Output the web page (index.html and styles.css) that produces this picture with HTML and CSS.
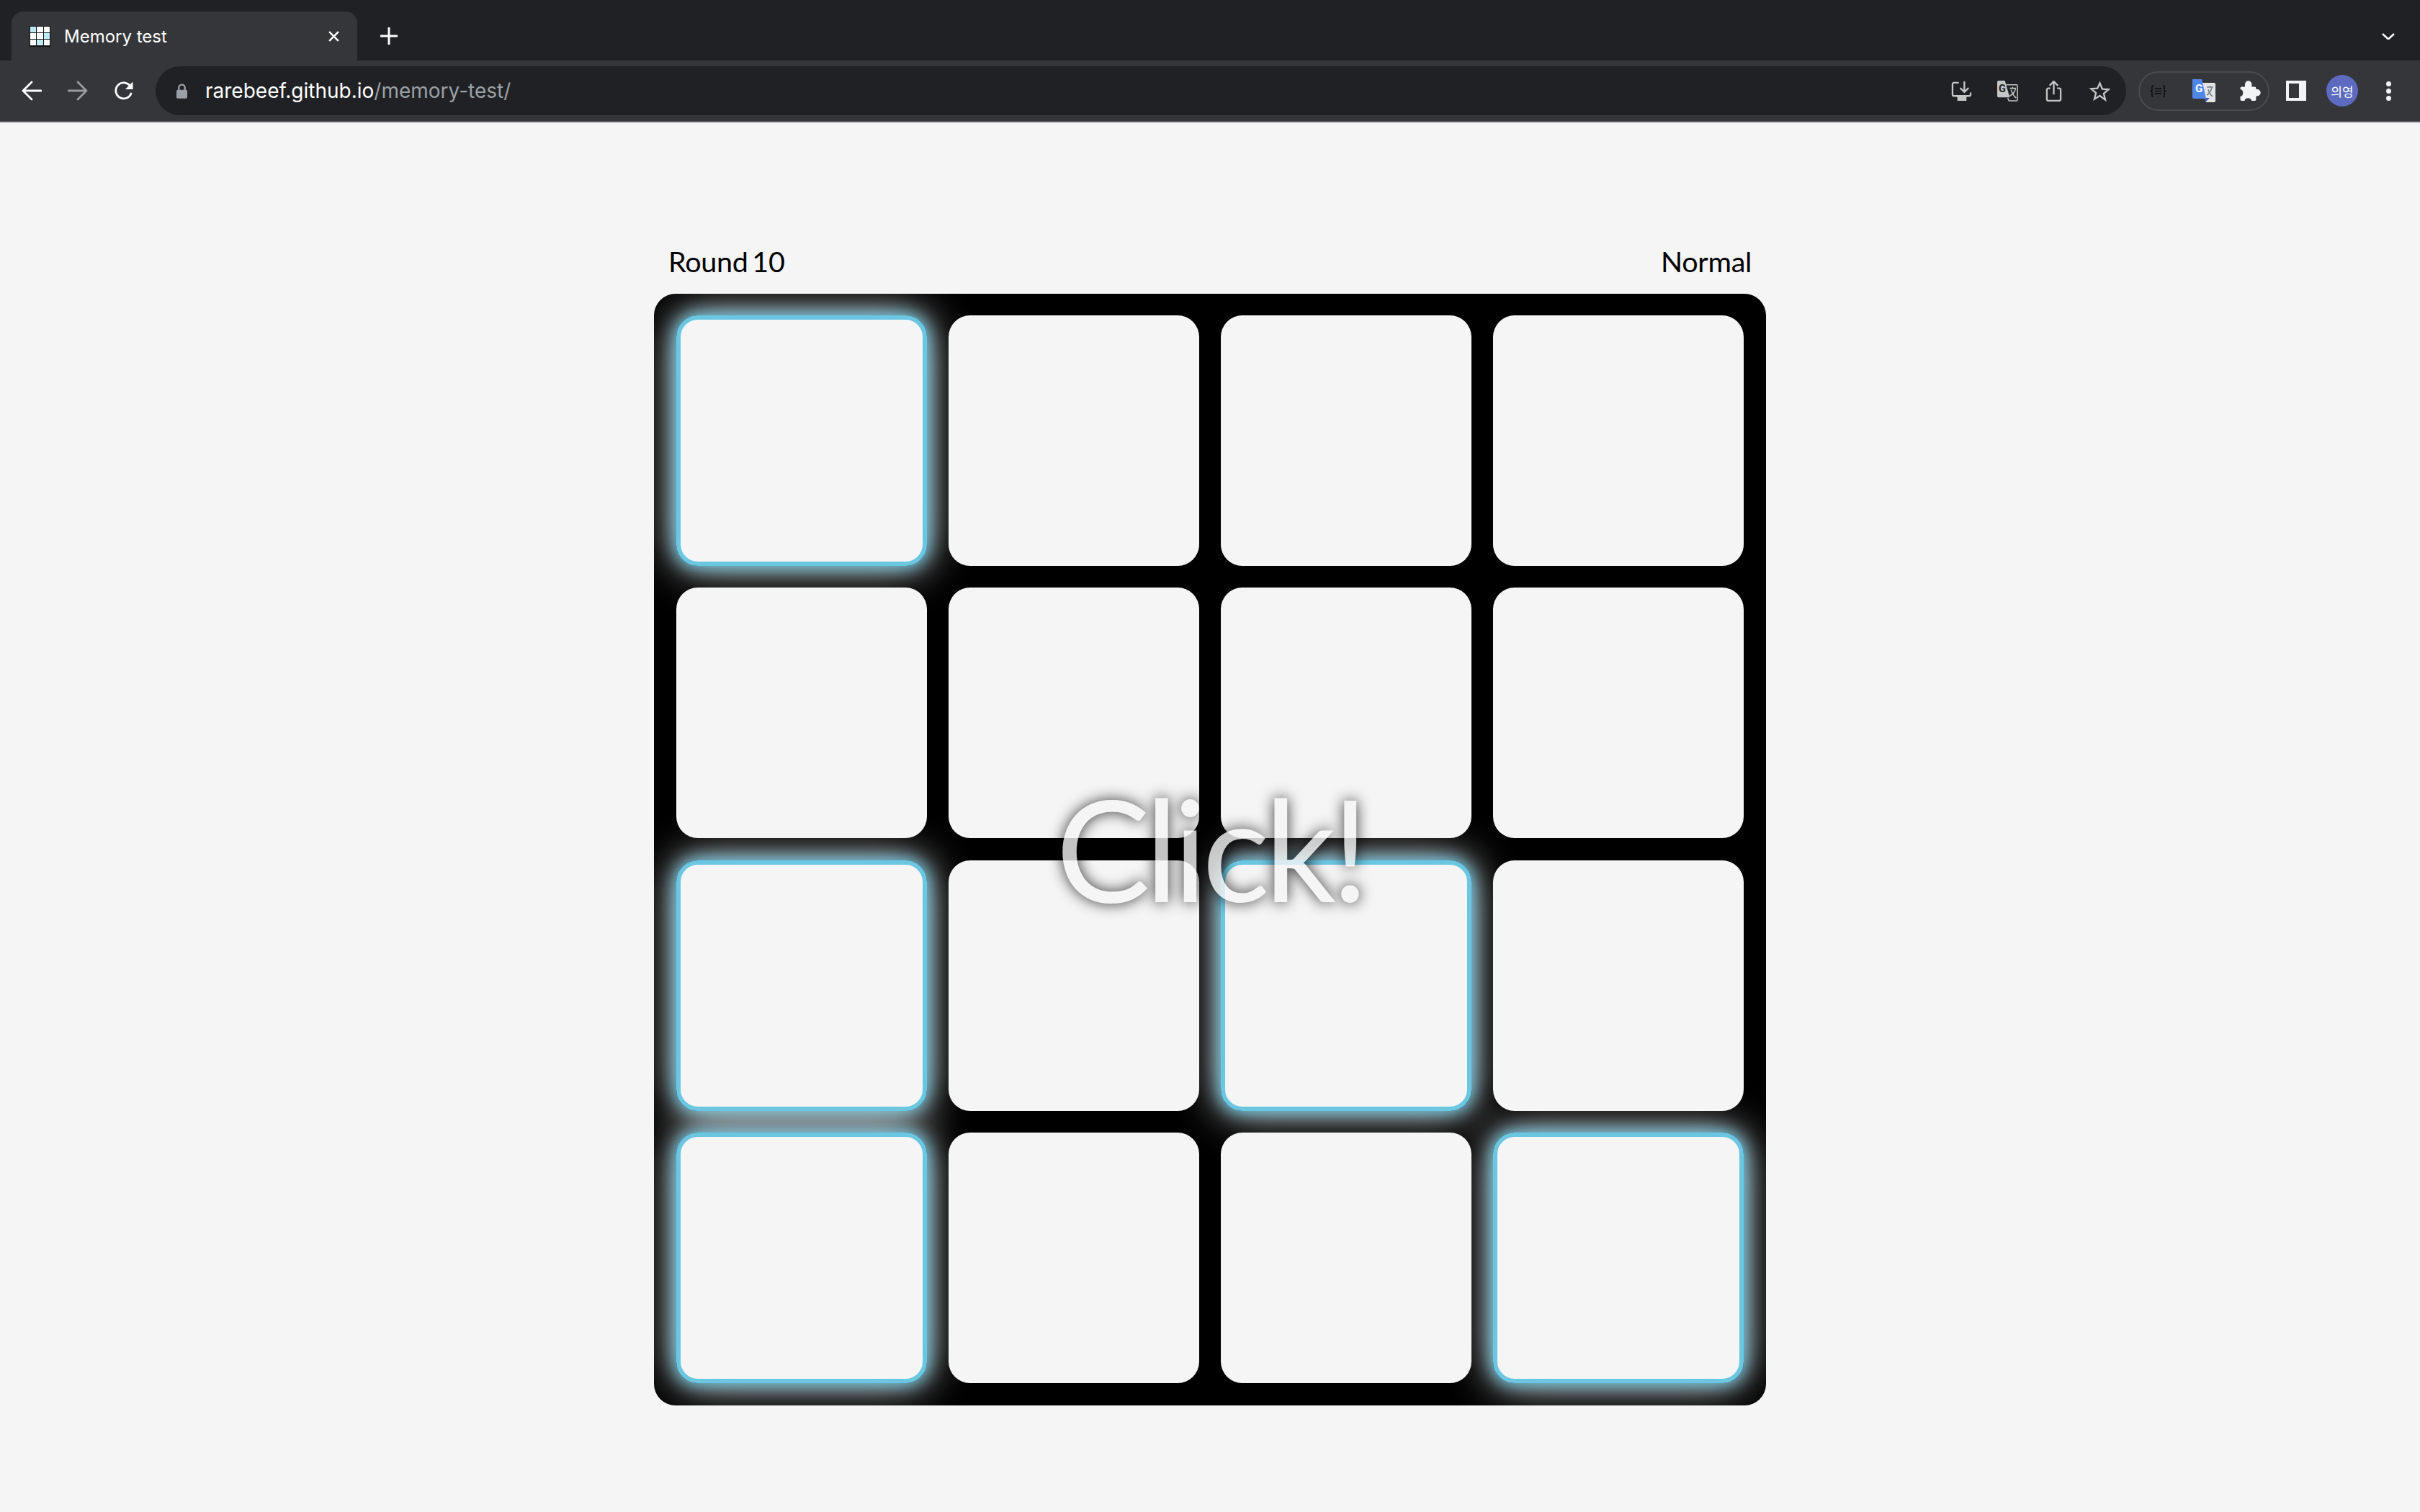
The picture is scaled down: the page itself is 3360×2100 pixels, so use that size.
FILE: index.html
```html
<!DOCTYPE html>
<html lang="en">
<head>
  <meta charset="UTF-8">
  <title>Memory test</title>
  <link rel="stylesheet" href="styles.css">
</head>
<body>
  <!-- Browser chrome -->
  <div class="tabstrip">
    <div class="tab">
      <div class="favicon">
        <span class="on"></span><span></span><span></span>
        <span></span><span></span><span class="on"></span>
        <span></span><span class="on"></span><span></span>
      </div>
      <span class="tab-title">Memory test</span>
      <svg class="tab-close" viewBox="0 0 16 14"><path d="M2 1l12 12M14 1L2 13"/></svg>
    </div>
    <svg class="new-tab" viewBox="0 0 24 24"><path d="M12 1v22M1 12h22"/></svg>
    <svg class="tab-menu" viewBox="0 0 18 9"><path d="M1 1l8 7.500L17 1"/></svg>
  </div>

  <div class="toolbar">
    <div class="btn">
      <svg viewBox="0 0 28 28" class="ico"><path d="M27 14H3M14 2L2 14l12 12"/></svg>
    </div>
    <div class="btn dim">
      <svg viewBox="0 0 28 28" class="ico"><path d="M1 14h24M14 2l12 12-12 12"/></svg>
    </div>
    <div class="btn">
      <svg viewBox="0 0 28 28" class="ico"><path d="M24 18A11 11 0 1 1 21.500 6L25 9.500"/><path class="fill" d="M26.500 1.500v10.500H16z"/></svg>
    </div>

    <div class="omnibox">
      <svg class="lock" viewBox="0 0 16 22"><path class="fill" d="M2 9h12a2 2 0 0 1 2 2v9a2 2 0 0 1-2 2H2a2 2 0 0 1-2-2v-9a2 2 0 0 1 2-2z"/><path class="lock-arc" d="M3.500 10V6a4.500 4.500 0 0 1 9 0v4"/></svg>
      <div class="url">rarebeef.github.io<span class="url-path">/memory-test/</span></div>
      <div class="omni-icons">
        <div class="btn">
          <svg viewBox="0 0 30 28" class="ico-sm"><path d="M11 2H4a2 2 0 0 0-2 2v15a2 2 0 0 0 2 2h22a2 2 0 0 0 2-2v-3"/><path d="M19 0v15M13 9.500l6 6 6-6"/><path class="fill" d="M7 21h17l-2 2v5H9v-5z"/></svg>
        </div>
        <div class="btn">
          <svg viewBox="0 0 30 30" class="ico-sm"><path class="fill" d="M2 0h9l7 24H2a2 2 0 0 1-2-2V2a2 2 0 0 1 2-2z"/><path class="thin" d="M13 6h15a1 1 0 0 1 1 1v21a1 1 0 0 1-1 1H17l-2-4"/><path class="thin" d="M18 11h9M22 9v3M26 12c-1 6-4 8-8 10M20 13c1 5 4 9 7 12"/><text class="g-mark" x="2" y="17">G</text></svg>
        </div>
        <div class="btn">
          <svg viewBox="0 0 24 30" class="ico-sm share"><path d="M7 11H4a2 2 0 0 0-2 2v14a2 2 0 0 0 2 2h16a2 2 0 0 0 2-2V13a2 2 0 0 0-2-2h-3"/><path d="M12 20V2M6 7l6-6 6 6"/></svg>
        </div>
        <div class="btn">
          <svg viewBox="0 0 30 30" class="ico-sm"><path d="M15 3.500l3.500 8.500 9 .7-6.900 5.900 2.200 8.900L15 21.700l-7.800 4.800 2.200-8.900-6.900-5.900 9-.7z"/></svg>
        </div>
      </div>
    </div>

    <div class="ext-pill">
      <div class="btn">
        <svg viewBox="0 0 26 18" class="ext-json"><path d="M6 1C3 1 4 4 4 6.500S3 9 1 9c2 0 3 0 3 2.500S3 17 6 17M20 1c3 0 2 3 2 5.500S23 9 25 9c-2 0-3 0-3 2.500s1 5.500-2 5.500M8 5.500h10M8 9h10M8 12.500h10"/></svg>
      </div>
      <div class="btn">
        <svg viewBox="0 0 32 32" class="ext-translate">
          <path fill="#e3e4e5" d="M13 5h17a2 2 0 0 1 2 2v23a2 2 0 0 1-2 2H19z"/>
          <path fill="#3b5cb5" d="M17 26h7l-6 6z"/>
          <path fill="#4f86ec" d="M0 0h13l6 27H2a2 2 0 0 1-2-2z"/>
          <path class="translate-glyph" d="M20 11h9M24.500 9v2M27 11c-1 6-4 9-7 11M22 14c1 4 3 8 6 10"/>
          <text class="g-light" x="4" y="18">G</text>
        </svg>
      </div>
      <div class="btn">
        <svg viewBox="0 0 29 28" class="ext-puzzle"><path d="M2.500 8.500H7V5a4.700 4.700 0 0 1 9.400 0v3.500h4a2 2 0 0 1 2 2V12h1.600a4.700 4.700 0 0 1 0 9.400h-1.600v4.600a2 2 0 0 1-2 2H16c0-5-9.400-5-9.400 0H2.500a2 2 0 0 1-2-2V22c5 0 5-10 0-10v-1.500a2 2 0 0 1 2-2z"/></svg>
      </div>
    </div>

    <div class="btn side-btn"><div class="side-panel"></div></div>
    <div class="btn"><div class="avatar">의영</div></div>
    <div class="btn"><div class="kebab"><i></i><i></i><i></i></div></div>
  </div>

  <!-- Game -->
  <main class="game">
    <div class="game-head">
      <span>Round 10</span>
      <span>Normal</span>
    </div>
    <div class="board">
      <div class="cell lit"></div><div class="cell"></div><div class="cell"></div><div class="cell"></div>
      <div class="cell"></div><div class="cell"></div><div class="cell"></div><div class="cell"></div>
      <div class="cell lit"></div><div class="cell"></div><div class="cell lit"></div><div class="cell"></div>
      <div class="cell lit"></div><div class="cell"></div><div class="cell"></div><div class="cell lit"></div>
      <div class="click-msg">Click!</div>
    </div>
  </main>
</body>
</html>
```

FILE: styles.css
```css
* {
  box-sizing: border-box;
}
html, body {
  margin: 0;
  height: 100%;
}
body {
  background-color: #f5f5f5;
  font-family: "Lato", "Open Sans", sans-serif;
  overflow: hidden;
}

/* tab strip */
.tabstrip {
  height: 84px;
  background-color: #202124;
  display: flex;
  align-items: flex-end;
  padding-left: 16px;
  position: relative;
}
.tab {
  width: 480px;
  height: 68px;
  background-color: #35363a;
  border-radius: 16px 16px 0 0;
  display: flex;
  align-items: center;
  padding: 0 24px 0 25px;
  color: #fff;
}
.favicon {
  width: 29px;
  height: 29px;
  display: grid;
  grid-template-columns: repeat(3, 1fr);
  grid-template-rows: repeat(3, 1fr);
  gap: 1px;
  padding: 1px;
  background-color: #111;
  flex: none;
}
.favicon span {
  background-color: #fff;
}
.favicon .on {
  background-color: #bdeaf7;
}
.tab-title {
  margin-left: 19px;
  font-family: "Inter", sans-serif;
  font-size: 24px;
  flex: 1;
}
.tab-close {
  width: 17px;
  height: 15px;
  fill: none;
  stroke: #fff;
  stroke-width: 2.400;
}
.new-tab {
  width: 24px;
  height: 24px;
  margin: 0 0 22px 32px;
  fill: none;
  stroke: #fff;
  stroke-width: 3;
  stroke-linecap: round;
}
.tab-menu {
  position: absolute;
  left: 3307px;
  top: 46px;
  width: 18px;
  height: 9px;
  fill: none;
  stroke: #fff;
  stroke-width: 2.400;
}

/* toolbar */
.toolbar {
  height: 86px;
  background-color: #35363a;
  border-bottom: 2px solid #5f6064;
  display: flex;
  align-items: center;
  padding-left: 12px;
}
.btn {
  width: 64px;
  height: 64px;
  display: flex;
  align-items: center;
  justify-content: center;
  flex: none;
}
.dim {
  opacity: .5;
}
.ico {
  width: 28px;
  height: 28px;
  fill: none;
  stroke: #fff;
  stroke-width: 2.800;
  stroke-linecap: round;
  stroke-linejoin: round;
}
.fill {
  fill: #c4c7c5;
  stroke: none;
}
.ico .fill {
  fill: #fff;
  stroke: none;
}
.omnibox {
  width: 2736px;
  height: 68px;
  margin-left: 12px;
  margin-right: 17px;
  background-color: #202124;
  border-radius: 34px;
  display: flex;
  align-items: center;
  padding: 0 5px 0 29px;
}
.lock {
  width: 15px;
  height: 21px;
  flex: none;
}
.lock .fill {
  fill: #9aa0a6;
}
.lock-arc {
  fill: none;
  stroke: #9aa0a6;
  stroke-width: 2.500;
}
.url {
  margin-left: 25px;
  font-family: "Inter", sans-serif;
  font-size: 28px;
  color: #fff;
  flex: 1;
}
.url-path {
  color: #9aa0a6;
}
.omni-icons {
  display: flex;
}
.ico-sm {
  width: 29px;
  height: 29px;
  fill: none;
  stroke: #c4c7c5;
  stroke-width: 2.400;
}
.ico-sm .thin {
  stroke-width: 1.600;
}
.ico-sm.share {
  width: 23px;
}
.g-mark {
  font-family: "Roboto", sans-serif;
  font-weight: 700;
  font-size: 15px;
  fill: #202124;
  stroke: none;
}
.ext-pill {
  width: 182px;
  height: 55px;
  border: 2px solid #4a4b4f;
  border-radius: 28px;
  display: flex;
  align-items: center;
  justify-content: center;
  flex: none;
}
.ext-pill .btn {
  width: 64px;
}
.ext-json {
  width: 25px;
  height: 17px;
  fill: none;
  stroke: #111;
  stroke-width: 1.800;
}
.ext-translate {
  width: 32px;
  height: 32px;
}
.translate-glyph {
  fill: none;
  stroke: #76838a;
  stroke-width: 1.600;
}
.g-light {
  font-family: "Roboto", sans-serif;
  font-weight: 700;
  font-size: 15px;
  fill: #fff;
}
.ext-puzzle {
  width: 29px;
  height: 28px;
  fill: #f1f3f4;
}
.side-btn {
  margin-left: 5px;
}
.side-panel {
  width: 28px;
  height: 28px;
  background-color: #35363a;
  border: solid #f1f3f4;
  border-width: 4px 10px 4px 4px;
}
.avatar {
  width: 44px;
  height: 44px;
  border-radius: 50%;
  background-color: #5c6bc0;
  color: #fff;
  font-family: "Noto Sans CJK KR", sans-serif;
  font-size: 17px;
  display: flex;
  align-items: center;
  justify-content: center;
}
.kebab {
  display: flex;
  flex-direction: column;
  gap: 3px;
}
.kebab i {
  width: 7px;
  height: 7px;
  border-radius: 50%;
  background-color: #f1f3f4;
}

/* game */
.game {
  width: 1544px;
  margin: 0 auto;
  padding-top: 178px;
}
.game-head {
  height: 60px;
  padding: 0 20px 31px;
  display: flex;
  justify-content: space-between;
  align-items: center;
  font-size: 39.500px;
  letter-spacing: -.3px;
  word-spacing: -4px;
  color: #000;
}
.board {
  position: relative;
  isolation: isolate;
  width: 1544px;
  height: 1544px;
  padding: 30px 31px 31px;
  background-color: #000;
  border-radius: 30px;
  overflow: hidden;
  display: grid;
  grid-template-columns: repeat(4, 1fr);
  grid-template-rows: repeat(4, 1fr);
  column-gap: 30px;
  row-gap: 30.330px;
}
.cell {
  background-color: #f5f5f5;
  border-radius: 30px;
}
.cell.lit {
  position: relative;
  border: 6px solid #6bc6e2;
}
/* glow sits under every cell, only the gutters show it */
.cell.lit::before {
  content: "";
  position: absolute;
  inset: -6px;
  z-index: -1;
  border-radius: 30px;
  box-shadow: 0 0 22px 2px #6bc6e2, 0 0 60px #f5f5f5;
}
.click-msg {
  position: absolute;
  z-index: 2;
  left: 0;
  right: 0;
  top: 0;
  bottom: 0;
  padding-bottom: 6px;
  display: flex;
  align-items: center;
  justify-content: center;
  font-size: 196px;
  letter-spacing: -7px;
  color: #f5f5f5;
  opacity: .8;
  text-shadow: 0 0 20px #000;
}
```
